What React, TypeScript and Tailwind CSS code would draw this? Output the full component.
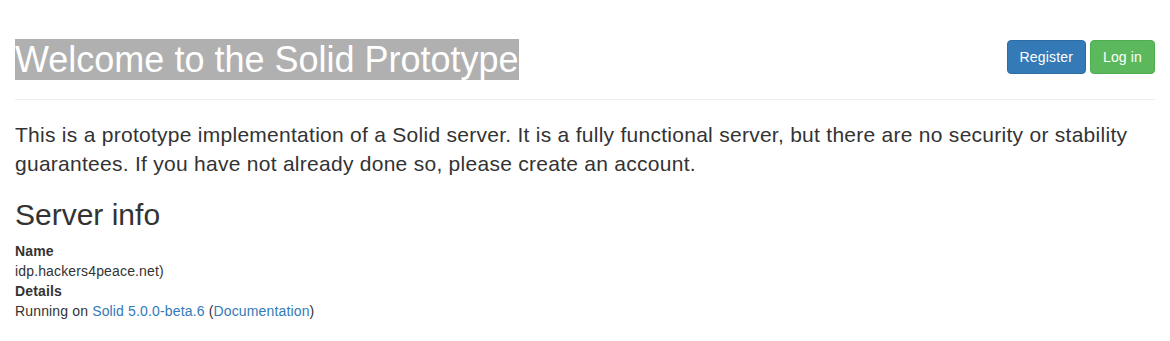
export default function App() {
  return (
    <div
      className="min-h-screen bg-white px-[15px] pt-[40px] text-[14px] leading-[20px] tracking-[0.15px] text-[#333]"
      style={{ fontFamily: '"Liberation Sans", Arial, Helvetica, sans-serif' }}
    >
      {/* page header */}
      <div className="mb-[20px] flex items-start justify-between border-b border-[#eee] pb-[9px]">
        <h1 className="mb-[10px] text-[36px] font-medium leading-[1.1] tracking-normal">
          <span className="bg-[#b0b0b0] text-white">Welcome to the Solid Prototype</span>
        </h1>
        <div className="flex">
          <button
            type="button"
            className="rounded-[4px] border border-[#2e6da4] bg-[#337ab7] px-[12px] py-[6px] text-[14px] leading-[20px] text-white"
          >
            Register
          </button>
          <button
            type="button"
            className="ml-[4px] rounded-[4px] border border-[#4cae4c] bg-[#5cb85c] px-[12px] py-[6px] text-[14px] leading-[20px] text-white"
          >
            Log in
          </button>
        </div>
      </div>

      <p className="mb-[20px] text-[21px] font-light leading-[1.4] tracking-[0.27px]">
        This is a prototype implementation of a Solid server. It is a fully functional server, but there are no
        security or stability guarantees. If you have not already done so, please create an account.
      </p>

      <h2 className="mb-[10px] text-[30px] font-medium leading-[1.1] tracking-normal">Server info</h2>
      <dl>
        <dt className="font-bold">Name</dt>
        <dd>idp.hackers4peace.net)</dd>
        <dt className="font-bold">Details</dt>
        <dd>
          Running on{" "}
          <a href="#" className="text-[#337ab7]">
            Solid 5.0.0-beta.6
          </a>{" "}
          (
          <a href="#" className="text-[#337ab7]">
            Documentation
          </a>
          )
        </dd>
      </dl>
    </div>
  );
}
